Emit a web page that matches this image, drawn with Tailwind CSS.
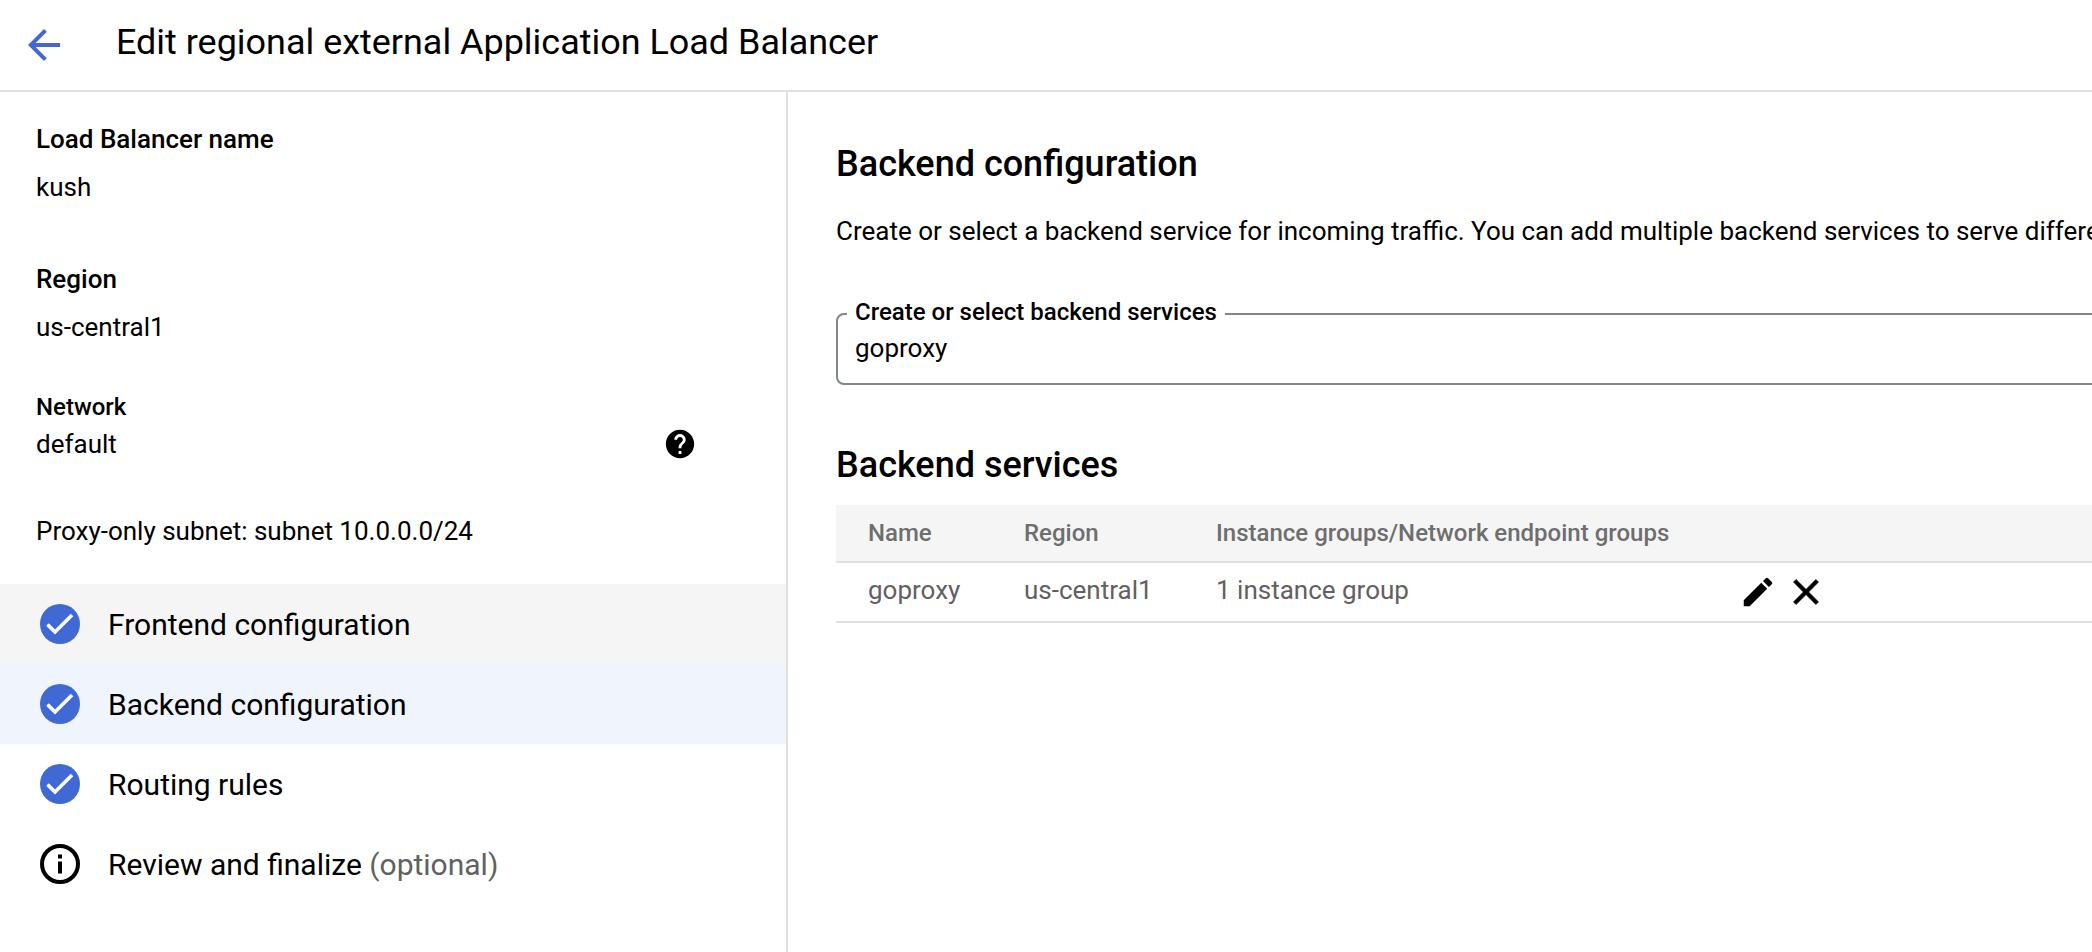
<!DOCTYPE html>
<html lang="en">
<head>
<meta charset="utf-8">
<title>Edit regional external Application Load Balancer</title>
<script src="https://cdn.jsdelivr.net/npm/@tailwindcss/browser@4"></script>
</head>
<body class="w-[2092px] h-[952px] overflow-hidden bg-white text-[#000000] font-['Roboto',sans-serif]">
<header class="h-[92px] border-b-2 border-[#e0e0e0] flex items-center">
  <svg class="w-12 h-12 ml-5 text-[#4169d4]" viewBox="0 0 24 24" fill="currentColor"><path d="M20 11H7.83l5.59-5.59L12 4l-8 8 8 8 1.41-1.41L7.83 13H20v-2z"/></svg>
  <h1 class="ml-[48px] text-[35.95px] leading-[44px] font-normal -mt-[6px]">Edit regional external Application Load Balancer</h1>
</header>
<div class="flex h-[860px]">
  <aside class="w-[788px] shrink-0 border-r-2 border-[#e0e0e0]">
    <div class="h-[492px] pl-9 pt-[27px] relative text-[26px]">
      <div class="font-medium leading-10">Load Balancer name</div>
      <div class="mt-2 leading-10">kush</div>
      <div class="mt-[52px] font-medium leading-10">Region</div>
      <div class="mt-2 leading-10">us-central1</div>
      <div class="mt-[44px] font-medium text-[24px] leading-8">Network</div>
      <div class="mt-[5px] leading-8">default</div>
      <div class="mt-[51px] leading-10">Proxy-only subnet: subnet 10.0.0.0/24</div>
      <svg class="absolute left-[663px] top-[335px] w-[34px] h-[34px]" viewBox="0 0 24 24" fill="#000"><path d="M12 2C6.48 2 2 6.48 2 12s4.48 10 10 10 10-4.48 10-10S17.52 2 12 2zm1 17h-2v-2h2v2zm2.07-7.75l-.9.92C13.45 12.9 13 13.5 13 15h-2v-.5c0-1.1.45-2.1 1.17-2.83l1.24-1.26c.37-.36.59-.86.59-1.41 0-1.1-.9-2-2-2s-2 .9-2 2H8c0-2.21 1.79-4 4-4s4 1.79 4 4c0 .88-.36 1.68-.93 2.25z"/></svg>
    </div>
    <nav class="text-[30px]">
      <div class="h-20 bg-[#f5f5f5] flex items-center pl-10 gap-[28px]">
        <svg class="w-10 h-10 shrink-0" viewBox="0 0 40 40"><circle cx="20" cy="20" r="20" fill="#4169d4"/><path d="M7.5 20.5l7.5 7.5 17-17" fill="none" stroke="#fff" stroke-width="3.6"/></svg>
        <span>Frontend configuration</span>
      </div>
      <div class="h-20 bg-[#f0f4fd] flex items-center pl-10 gap-[28px]">
        <svg class="w-10 h-10 shrink-0" viewBox="0 0 40 40"><circle cx="20" cy="20" r="20" fill="#4169d4"/><path d="M7.5 20.5l7.5 7.5 17-17" fill="none" stroke="#fff" stroke-width="3.6"/></svg>
        <span>Backend configuration</span>
      </div>
      <div class="h-20 flex items-center pl-10 gap-[28px]">
        <svg class="w-10 h-10 shrink-0" viewBox="0 0 40 40"><circle cx="20" cy="20" r="20" fill="#4169d4"/><path d="M7.5 20.5l7.5 7.5 17-17" fill="none" stroke="#fff" stroke-width="3.6"/></svg>
        <span>Routing rules</span>
      </div>
      <div class="h-20 flex items-center pl-10 gap-[28px]">
        <svg class="w-10 h-10 shrink-0" viewBox="0 0 40 40"><circle cx="20" cy="20" r="18" fill="none" stroke="#000" stroke-width="4"/><rect x="18" y="17.5" width="4" height="12" fill="#000"/><rect x="18" y="10.5" width="4" height="4" fill="#000"/></svg>
        <span>Review and finalize <span class="text-[#616161]">(optional)</span></span>
      </div>
    </nav>
  </aside>
  <main class="flex-1 min-w-0 overflow-hidden pl-[48px] pt-[48px]">
    <div class="w-[1400px]">
      <h2 class="text-[36px] leading-12 font-medium">Backend configuration</h2>
      <p class="mt-[23px] text-[26px] leading-10 whitespace-nowrap">Create or select a backend service for incoming traffic. You can add multiple backend services to serve different types of content.</p>
      <div class="relative mt-[62px] h-[72px] border-2 border-[#80868b] rounded-lg pl-[17px] pt-[13px] text-[26px] leading-10">
        <span class="absolute left-[9px] -top-[19px] bg-white px-2 text-[24px] leading-8 font-medium">Create or select backend services</span>
        goproxy
      </div>
      <h2 class="mt-[56px] text-[36px] leading-12 font-medium">Backend services</h2>
      <div class="mt-[16px] h-[58px] bg-[#f5f5f5] border-b-2 border-[#e0e0e0] flex items-center text-[24px] font-medium text-[#6e6e6e]">
        <span class="w-[188px] pl-8">Name</span>
        <span class="w-[192px]">Region</span>
        <span>Instance groups/Network endpoint groups</span>
      </div>
      <div class="h-[60px] border-b-2 border-[#e0e0e0] flex items-center text-[26px] text-[#616161]">
        <span class="w-[188px] pl-8 -mt-[4px]">goproxy</span>
        <span class="w-[192px] -mt-[4px]">us-central1</span>
        <span class="w-[520px] -mt-[4px]">1 instance group</span>
        <span class="flex items-center">
          <svg class="w-[38px] h-[38px] ml-[3px]" viewBox="0 0 24 24" fill="#000"><path d="M3 17.25V21h3.75L17.81 9.94l-3.75-3.75L3 17.25zM20.71 7.04c.39-.39.39-1.02 0-1.41l-2.34-2.34a.996.996 0 0 0-1.41 0l-1.83 1.83 3.75 3.75 1.83-1.83z"/></svg>
          <svg class="w-[44px] h-[44px] ml-[7px]" viewBox="0 0 24 24" fill="#000" stroke="#000" stroke-width="0.4" stroke-linejoin="miter"><path d="M18.8 6.61L17.39 5.2 12 10.59 6.61 5.2 5.2 6.61 10.59 12 5.2 17.39 6.61 18.8 12 13.41 17.39 18.8 18.8 17.39 13.41 12z"/></svg>
        </span>
      </div>
    </div>
  </main>
</div>
</body>
</html>
